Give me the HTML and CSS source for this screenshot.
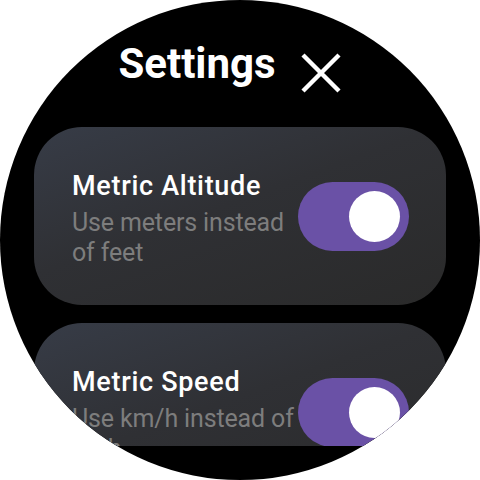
FILE: index.html
```html
<!DOCTYPE html>
<html>
<head>
<meta charset="utf-8">
<link rel="stylesheet" href="styles.css">
</head>
<body>
<div class="screen">
  <div class="header">
    <span class="title">Settings</span>
    <svg class="close" width="40" height="40" viewBox="0 0 40 40" aria-label="Close">
      <path d="M2 2 L38 38 M38 2 L2 38" stroke="#fff" stroke-width="4.4" fill="none"/>
    </svg>
  </div>
  <div class="list">
    <div class="card">
      <div class="text">
        <div class="label">Metric Altitude</div>
        <div class="desc">Use meters instead of feet</div>
      </div>
      <div class="toggle on"><div class="knob"></div></div>
    </div>
    <div class="card">
      <div class="text">
        <div class="label">Metric Speed</div>
        <div class="desc">Use km/h instead of mph</div>
      </div>
      <div class="toggle on"><div class="knob"></div></div>
    </div>
  </div>
</div>
</body>
</html>
```
FILE: styles.css
```css
html, body {
  margin: 0;
  padding: 0;
  background: #ffffff;
}
.screen {
  width: 480px;
  height: 480px;
  border-radius: 50%;
  overflow: hidden;
  background: #000000;
  display: flex;
  flex-direction: column;
  font-family: Roboto, "Noto Sans", sans-serif;
}
.header {
  display: flex;
  justify-content: center;
  align-items: flex-start;
  gap: 25px;
  padding: 39px 21px 0 0;
  height: 49px;
}
.title {
  color: #ffffff;
  font-weight: 700;
  font-size: 42px;
  line-height: 49px;
}
.close {
  margin-top: 14px;
  flex: none;
}
.list {
  margin-top: 39px;
  height: 319px;
  overflow: hidden;
  display: flex;
  flex-direction: column;
  gap: 18px;
  padding: 0 34px;
}
.card {
  flex: none;
  display: flex;
  align-items: center;
  gap: 0;
  padding: 38px 37px 37px 38px;
  border-radius: 48px;
  background: linear-gradient(160deg, #373c47 0%, #2f3034 45%, #2a2a2a 100%);
}
.text {
  flex: 1;
  min-width: 0;
  padding-top: 4px;
}
.label {
  color: #ffffff;
  font-weight: 500;
  font-size: 27px;
  line-height: 34px;
  letter-spacing: 0.7px;
}
.desc {
  margin-top: 5px;
  color: #7d7d7d;
  font-size: 25px;
  line-height: 30px;
  letter-spacing: -0.15px;
}
.toggle {
  flex: none;
  width: 111px;
  height: 69px;
  border-radius: 35px;
  background: #6a51a6;
  display: flex;
  align-items: center;
  justify-content: flex-end;
  padding-right: 9px;
  box-sizing: border-box;
}
.knob {
  width: 51px;
  height: 51px;
  border-radius: 50%;
  background: #ffffff;
}
```
